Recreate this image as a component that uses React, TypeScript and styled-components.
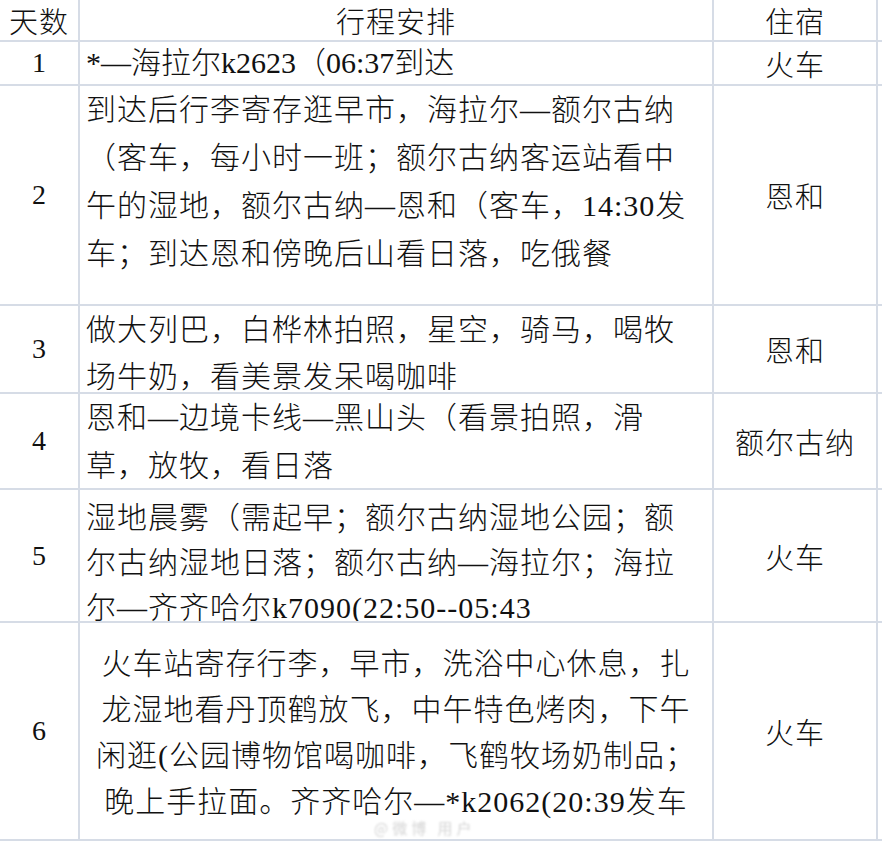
import React from 'react';
import styled, { createGlobalStyle } from 'styled-components';

const GlobalStyle = createGlobalStyle`
    html, body {
        margin: 0;
        padding: 0;
        background: #ffffff;
    }
    body {
        font-family: "Liberation Serif", "Noto Sans CJK SC", serif;
        color: #111;
    }
`;

const LINE = '#d6dce6';

const Sheet = styled.div`
    position: relative;
    width: 882px;
    display: grid;
    grid-template-columns: 78px 632px 162px 4px;
    grid-template-rows: 40px 42px 218px 86px 94px 131px 216px;
    gap: 2px;
    padding-bottom: 2px;
    background: ${LINE};
`;

const Cell = styled.div`
    background: #fff;
    overflow: hidden;
    display: flex;
    align-items: center;
    justify-content: center;
`;

const HeadCell = styled(Cell)`
    font-size: 29px;
    font-weight: 300;
    letter-spacing: 1px;
`;

const DayCell = styled(Cell)`
    font-size: 28px;
`;

const StayCell = styled(Cell)`
    font-size: 29px;
    font-weight: 300;
    letter-spacing: 1px;
`;

const EdgeCell = styled.div`
    background: #fff;
`;

const PlanCell = styled(Cell)<{ $center?: boolean; $top: number; $lh: number; $spacing: number }>`
    flex-direction: column;
    justify-content: ${p => (p.$center ? 'center' : 'flex-start')};
    align-items: ${p => (p.$center ? 'center' : 'flex-start')};
    padding: ${p => p.$top}px 0 0 ${p => (p.$center ? 0 : 6)}px;
    box-sizing: border-box;
    font-size: 30px;
    font-weight: 300;
    line-height: ${p => p.$lh}px;
    letter-spacing: ${p => p.$spacing}px;
`;

const Line = styled.div`
    white-space: nowrap;
`;

const Watermark = styled.div`
    position: absolute;
    left: 374px;
    top: 819px;
    font-family: "Noto Sans CJK SC", sans-serif;
    font-size: 15px;
    line-height: 18px;
    color: rgba(170, 170, 170, 0.5);
    filter: blur(1.3px);
    letter-spacing: 4px;
    pointer-events: none;
`;

type Day = {
    day: string;
    lines: string[];
    stay: string;
    center?: boolean;
    top: number;
    lh: number;
    spacing: number;
};

const DAYS: Day[] = [
    { day: '1', lines: ['*—海拉尔k2623（06:37到达'], stay: '火车', center: false, top: 0, lh: 42, spacing: 0 },
    {
        day: '2',
        lines: [
            '到达后行李寄存逛早市，海拉尔—额尔古纳',
            '（客车，每小时一班；额尔古纳客运站看中',
            '午的湿地，额尔古纳—恩和（客车，14:30发',
            '车；到达恩和傍晚后山看日落，吃俄餐',
        ],
        stay: '恩和',
        top: 0,
        lh: 48,
        spacing: 1,
    },
    {
        day: '3',
        lines: ['做大列巴，白桦林拍照，星空，骑马，喝牧', '场牛奶，看美景发呆喝咖啡'],
        stay: '恩和',
        top: 0,
        lh: 47,
        spacing: 1,
    },
    {
        day: '4',
        lines: ['恩和—边境卡线—黑山头（看景拍照，滑', '草，放牧，看日落'],
        stay: '额尔古纳',
        top: 0,
        lh: 48,
        spacing: 1,
    },
    {
        day: '5',
        lines: [
            '湿地晨雾（需起早；额尔古纳湿地公园；额',
            '尔古纳湿地日落；额尔古纳—海拉尔；海拉',
            '尔—齐齐哈尔k7090(22:50--05:43',
        ],
        stay: '火车',
        top: 5,
        lh: 45,
        spacing: 1,
    },
    {
        day: '6',
        lines: [
            '火车站寄存行李，早市，洗浴中心休息，扎',
            '龙湿地看丹顶鹤放飞，中午特色烤肉，下午',
            '闲逛(公园博物馆喝咖啡，飞鹤牧场奶制品；',
            '晚上手拉面。齐齐哈尔—*k2062(20:39发车',
        ],
        stay: '火车',
        center: true,
        top: 4,
        lh: 46,
        spacing: 1,
    },
];

const App = () => {
    return (
        <>
            <GlobalStyle />
            <Sheet>
                <HeadCell>天数</HeadCell>
                <HeadCell>行程安排</HeadCell>
                <HeadCell>住宿</HeadCell>
                <EdgeCell />
                {DAYS.map(d => (
                    <React.Fragment key={d.day}>
                        <DayCell>{d.day}</DayCell>
                        <PlanCell $center={d.center} $top={d.top} $lh={d.lh} $spacing={d.spacing}>
                            {d.lines.map((l, i) => (
                                <Line key={i}>{l}</Line>
                            ))}
                        </PlanCell>
                        <StayCell>{d.stay}</StayCell>
                        <EdgeCell />
                    </React.Fragment>
                ))}
                <Watermark>@微博 用户</Watermark>
            </Sheet>
        </>
    );
};

export default App;
